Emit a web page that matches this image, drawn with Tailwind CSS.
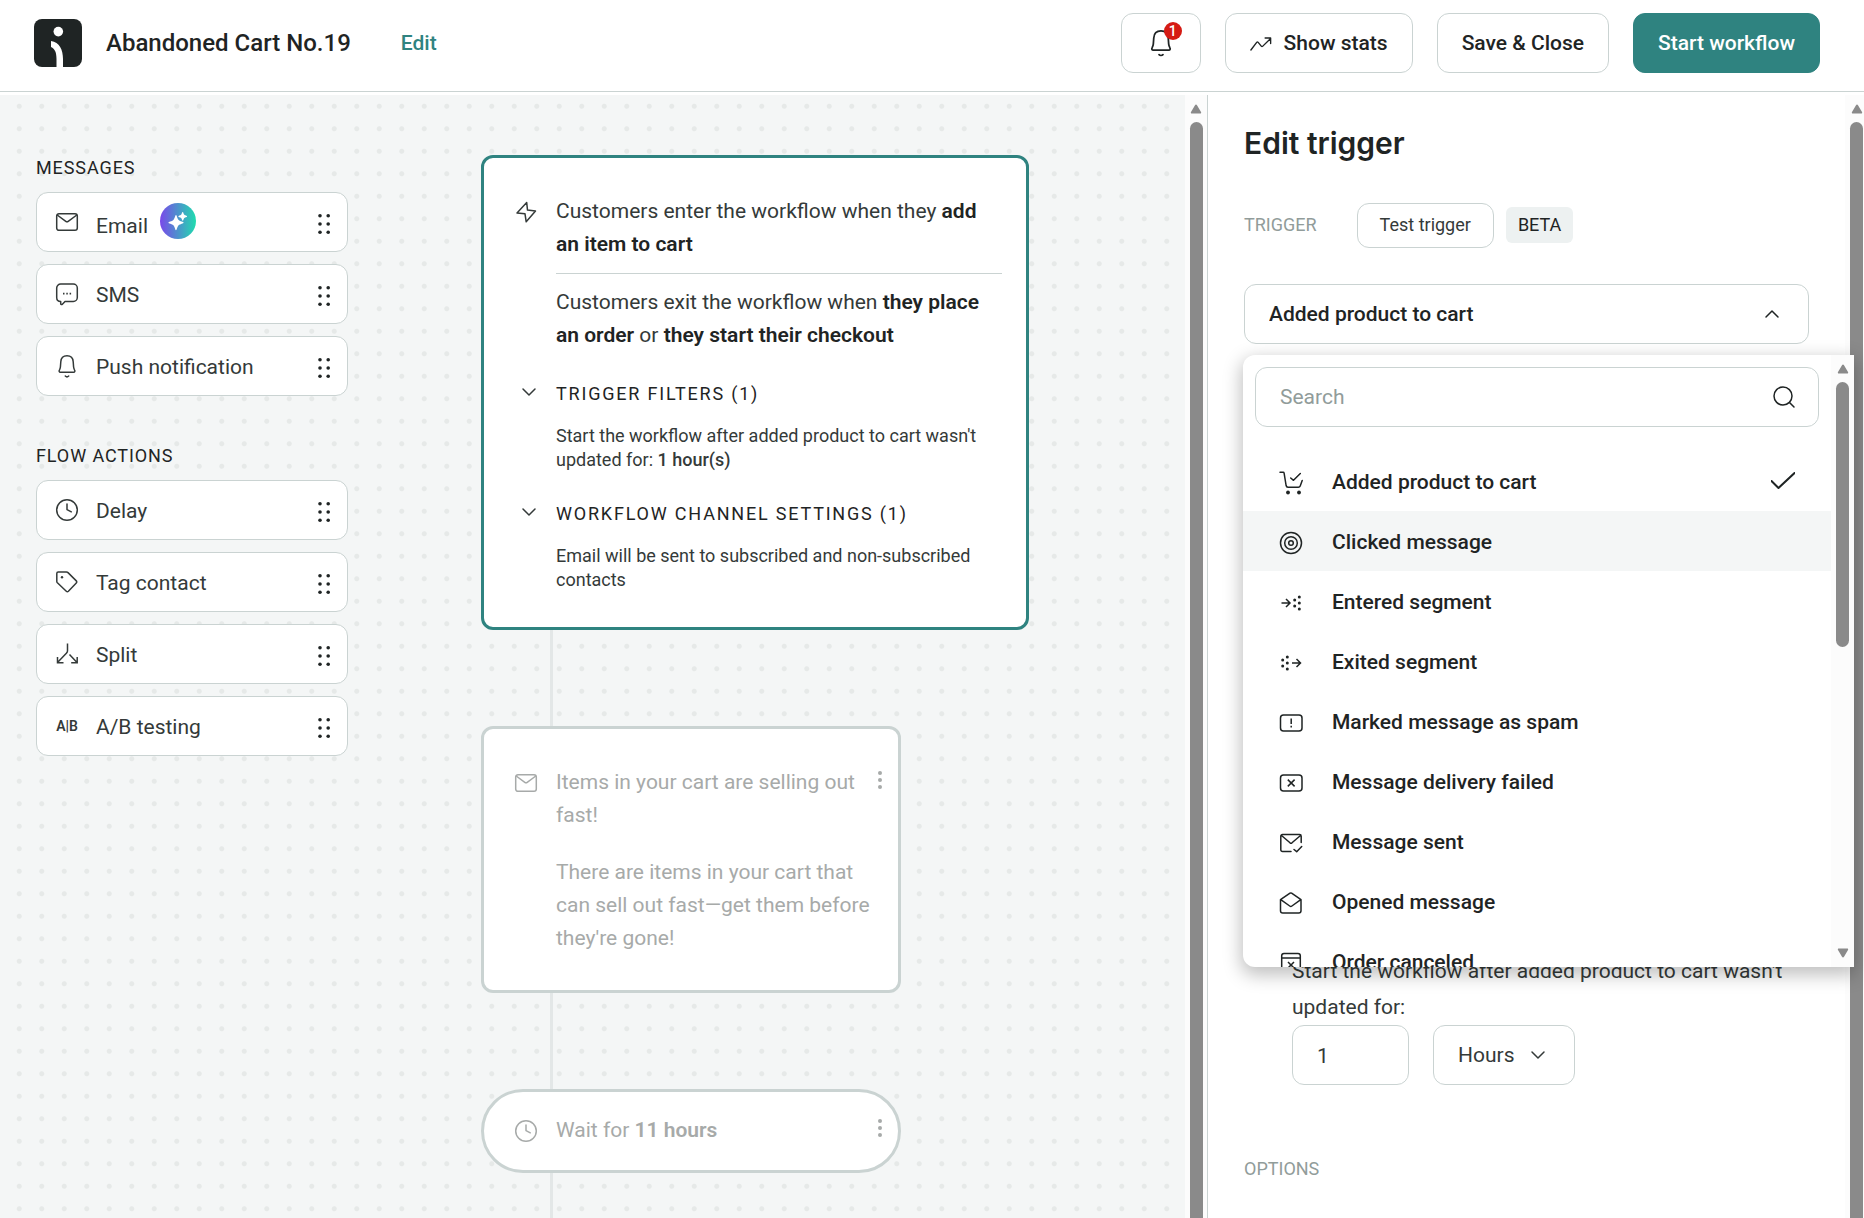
<!DOCTYPE html>
<html lang="en">
<head>
  <meta charset="UTF-8" />
  <meta name="viewport" content="width=device-width, initial-scale=1.0" />
  <title>Abandoned Cart No.19</title>
  <script src="https://cdn.jsdelivr.net/npm/@tailwindcss/browser@4"></script>
  <style>
    body {
      font-family: Roboto, "Liberation Sans", sans-serif;
    }
    .dots {
      background-color: #f4f6f6;
      background-image:
        radial-gradient(circle at 25% 25%, #e6e9e8 2px, transparent 3px),
        radial-gradient(circle at 75% 25%, #e6e9e8 2px, transparent 3px),
        radial-gradient(circle at 25% 75%, #e6e9e8 2px, transparent 3px),
        radial-gradient(circle at 75% 75%, #e6e9e8 2px, transparent 3px);
      background-size: 45px 45px;
      background-position: 8px 0;
    }
  </style>
</head>
<body class="h-screen flex flex-col overflow-hidden bg-white text-[21px] text-[#1f2424]">

  <!-- shared icons -->
  <svg class="hidden">
    <symbol id="mail" viewBox="0 0 24 24" fill="none" stroke="currentColor" stroke-width="1.5" stroke-linejoin="round">
      <rect x="1.7" y="3.7" width="20.6" height="16.6" rx="2.3" />
      <path d="M2.2 5l8.6 6.3c.8.6 1.6.6 2.4 0L21.8 5" />
    </symbol>
    <symbol id="bell" viewBox="0 0 24 24" fill="none" stroke="currentColor" stroke-width="1.5" stroke-linejoin="round" stroke-linecap="round">
      <path d="M12 1.7c-3.8 0-6 2.5-6.2 6L5.4 13c-.1 1-.4 1.9-.9 2.8-.8 1.3-.3 2.4.9 2.4h13.2c1.2 0 1.7-1.1.9-2.4-.5-.9-.8-1.8-.9-2.8l-.4-5.3c-.2-3.5-2.4-6-6.2-6z" />
      <path d="M10.3 22c.9.9 2.500.9 3.400 0" />
    </symbol>
    <symbol id="clock" viewBox="0 0 24 24" fill="none" stroke="currentColor" stroke-width="1.5" stroke-linecap="round" stroke-linejoin="round">
      <circle cx="12" cy="12" r="10.3" />
      <path d="M12 6v5.600l4.300 2.200" />
    </symbol>
    <symbol id="handle" viewBox="0 0 24 24" fill="currentColor">
      <circle cx="8" cy="3.7" r="1.8" /><circle cx="16.2" cy="3.7" r="1.8" />
      <circle cx="8" cy="12" r="1.8" /><circle cx="16.2" cy="12" r="1.8" />
      <circle cx="8" cy="20.3" r="1.8" /><circle cx="16.2" cy="20.3" r="1.8" />
    </symbol>
    <symbol id="kebab" viewBox="0 0 24 24" fill="currentColor">
      <circle cx="12" cy="5" r="2" /><circle cx="12" cy="12" r="2" /><circle cx="12" cy="19" r="2" />
    </symbol>
    <symbol id="chevron" viewBox="0 0 18 18" fill="none" stroke="currentColor" stroke-width="1.5" stroke-linecap="round" stroke-linejoin="round">
      <path d="M3 6l6 6 6-6" />
    </symbol>
    <symbol id="arrow" viewBox="0 0 12 10" fill="#8a8a8a">
      <path d="M5 1.2c.5-.9 1.500-.9 2 0l4 6.800c.5.900 0 1.500-.8 1.500H1.800C1 9.500.5 8.900 1 8z" />
    </symbol>
  </svg>

  <header class="h-[92px] shrink-0 flex items-center border-b border-[#cad3d2] pb-[5px] pl-[34px] pr-11 font-medium">
    <svg class="size-12" viewBox="0 0 48 48">
      <rect width="48" height="48" rx="8" fill="#1f2424" />
      <circle cx="24.3" cy="12.6" r="4.8" fill="#fff" />
      <path d="M17 22C25.500 23 29 31 29 40v8h-6.500v-8c0-6.500-1.500-10-5.500-12z" fill="#fff" />
    </svg>
    <h1 class="ml-6 text-2xl">Abandoned Cart No.19</h1>
    <a href="#" class="ml-[50px] pt-0.5 text-[#2f8380]">Edit</a>
    <div class="ml-auto flex gap-6">
      <button aria-label="Notifications" class="relative flex h-[60px] w-20 items-center justify-center rounded-xl border border-[#cad3d2]">
        <svg class="size-7"><use href="#bell" /></svg>
        <span class="absolute right-[18px] top-2 flex size-[18px] items-center justify-center rounded-full bg-[#d51b14] text-sm text-white">1</span>
      </button>
      <button class="flex h-[60px] items-center gap-3 rounded-xl border border-[#cad3d2] px-6 pt-0.5">
        <svg class="size-[22px]" viewBox="0 0 24 24" fill="none" stroke="currentColor" stroke-width="1.5" stroke-linejoin="round" stroke-linecap="round">
          <path d="M1 18.500l6.500-8.500c.4-.4.800-.4 1.200 0l3.800 4.600c.4.400.8.400 1.200 0L22.500 6M16.500 5.500h6v6" />
        </svg>
        Show stats
      </button>
      <button class="h-[60px] rounded-xl border border-[#cad3d2] px-6 pt-0.5">Save &amp; Close</button>
      <button class="h-[60px] rounded-xl border border-[#2f8380] bg-[#2f8380] px-6 pt-0.5 text-white">Start workflow</button>
    </div>
  </header>

  <main class="mt-[3px] flex min-h-0 flex-1">

    <!-- workflow canvas -->
    <div class="dots flex min-w-0 flex-1 overflow-hidden pl-9">
      <aside class="w-[312px] shrink-0 pt-[61px] text-[#343a39]">
        <h2 class="mb-3 text-lg leading-6 tracking-wider text-[#1f2424]">MESSAGES</h2>
        <ul class="flex flex-col gap-3">
          <li class="flex h-[60px] items-center gap-[17px] rounded-xl border border-[#cad3d2] bg-white pl-[18px] pr-[11px]">
            <svg class="size-6"><use href="#mail" /></svg>
            <span class="flex flex-1 items-center gap-3">
              <span class="pt-2.5">Email</span>
              <svg class="mb-0.5 size-9" viewBox="0 0 36 36">
                <defs>
                  <linearGradient id="ai"><stop offset="0" stop-color="#7a48ea" /><stop offset="1" stop-color="#1fdcae" /></linearGradient>
                </defs>
                <circle cx="18" cy="18" r="18" fill="url(#ai)" />
                <path d="M16 12c.9 0 1.100 3.500 2.600 5s5 1.700 5 2.700-3.500 1.100-5 2.600-1.700 5-2.600 5-1.100-3.500-2.600-5-5-1.700-5-2.600 3.500-1.200 5-2.700 1.700-5 2.600-5z" fill="#fff" />
                <path d="M22.700 9c.7 0 .7 2 1.600 2.800s2.800.9 2.800 1.600-2 .8-2.800 1.600-.9 2.800-1.600 2.800-.7-2-1.600-2.800-2.800-.9-2.800-1.600 2-.8 2.800-1.600.9-2.800 1.600-2.800z" fill="#fff" />
              </svg>
            </span>
            <svg class="mt-1 size-6 text-[#1f2424]"><use href="#handle" /></svg>
          </li>
          <li class="flex h-[60px] items-center gap-[17px] rounded-xl border border-[#cad3d2] bg-white pl-[18px] pr-[11px]">
            <svg class="size-6" viewBox="0 0 24 24" fill="none" stroke="currentColor" stroke-width="1.5" stroke-linejoin="round">
              <path d="M5.700 2h12.600a4 4 0 0 1 4 4v9.500a4 4 0 0 1-4 4H10l-2.600 2.700c-.7.700-1.700.5-1.700-.5V19.500c-2.200 0-4-1.500-4-4V6a4 4 0 0 1 4-4z" />
              <path d="M8 11.700h1.500M11.300 11.700h1.500M14.600 11.700h1.500" stroke-width="1.8" />
            </svg>
            <span class="flex-1 pt-[3px]">SMS</span>
            <svg class="mt-1 size-6 text-[#1f2424]"><use href="#handle" /></svg>
          </li>
          <li class="flex h-[60px] items-center gap-[17px] rounded-xl border border-[#cad3d2] bg-white pl-[18px] pr-[11px]">
            <svg class="size-6"><use href="#bell" /></svg>
            <span class="flex-1 pt-[3px]">Push notification</span>
            <svg class="mt-1 size-6 text-[#1f2424]"><use href="#handle" /></svg>
          </li>
        </ul>

        <h2 class="mb-3 mt-12 text-lg leading-6 tracking-wider text-[#1f2424]">FLOW ACTIONS</h2>
        <ul class="flex flex-col gap-3">
          <li class="flex h-[60px] items-center gap-[17px] rounded-xl border border-[#cad3d2] bg-white pl-[18px] pr-[11px]">
            <svg class="size-6"><use href="#clock" /></svg>
            <span class="flex-1 pt-[3px]">Delay</span>
            <svg class="mt-1 size-6 text-[#1f2424]"><use href="#handle" /></svg>
          </li>
          <li class="flex h-[60px] items-center gap-[17px] rounded-xl border border-[#cad3d2] bg-white pl-[18px] pr-[11px]">
            <svg class="size-6" viewBox="0 0 24 24" fill="none" stroke="currentColor" stroke-width="1.5" stroke-linejoin="round">
              <path d="M3.200 2h8.300c.6 0 1.100.2 1.500.6l8.300 8.300c.6.6.6 1.400 0 2l-7.900 8.300c-.6.600-1.500.6-2.100 0l-8.900-8.400c-.4-.4-.6-.9-.6-1.400V3.400C1.800 2.600 2.400 2 3.200 2z" />
              <circle cx="7" cy="7.3" r="1.2" fill="currentColor" stroke="none" />
            </svg>
            <span class="flex-1 pt-[3px]">Tag contact</span>
            <svg class="mt-1 size-6 text-[#1f2424]"><use href="#handle" /></svg>
          </li>
          <li class="flex h-[60px] items-center gap-[17px] rounded-xl border border-[#cad3d2] bg-white pl-[18px] pr-[11px]">
            <svg class="size-6" viewBox="0 0 24 24" fill="none" stroke="currentColor" stroke-width="1.5">
              <path d="M12.500 1.500v7.200c0 .9-.3 1.600-.9 2.200L2.500 20.500M2.500 15v5.700h6M14.500 12.500l7.500 8M22.200 15v5.700h-6" />
            </svg>
            <span class="flex-1 pt-[3px]">Split</span>
            <svg class="mt-1 size-6 text-[#1f2424]"><use href="#handle" /></svg>
          </li>
          <li class="flex h-[60px] items-center gap-[17px] rounded-xl border border-[#cad3d2] bg-white pl-[18px] pr-[11px]">
            <span class="w-6 text-center text-sm font-semibold">A|B</span>
            <span class="flex-1 pt-[3px]">A/B testing</span>
            <svg class="mt-1 size-6 text-[#1f2424]"><use href="#handle" /></svg>
          </li>
        </ul>
      </aside>

      <section class="ml-[133px] flex w-[548px] shrink-0 flex-col pt-[60px] leading-[33px] text-[#343a39]">
        <article class="grid grid-cols-[24px_1fr] gap-x-[18px] rounded-xl border-3 border-[#2f8380] bg-white pb-[35px] pl-[30px] pr-6 pt-[37px]">
          <svg class="mt-[5px] size-6" viewBox="0 0 24 24" fill="none" stroke="currentColor" stroke-width="1.5" stroke-linejoin="round">
            <path d="M12.700 2.500 3 12.900l8 .900 1.200 8L21.500 11l-8-.900z" />
          </svg>
          <div>
            <p>Customers enter the workflow when they <strong class="font-semibold text-[#1f2424]">add an item to cart</strong></p>
            <hr class="my-3 border-[#cad3d2]" />
            <p>Customers exit the workflow when <strong class="font-semibold text-[#1f2424]">they place an order</strong> or <strong class="font-semibold text-[#1f2424]">they start their checkout</strong></p>
          </div>
          <svg class="mt-[31px] size-[18px] justify-self-end"><use href="#chevron" /></svg>
          <div class="mt-[30px] text-lg leading-6">
            <h3 class="tracking-widest text-[#1f2424]">TRIGGER FILTERS (1)</h3>
            <p class="mt-[18px]">Start the workflow after added product to cart wasn't updated for: <strong class="font-medium">1 hour(s)</strong></p>
          </div>
          <svg class="mt-[31px] size-[18px] justify-self-end"><use href="#chevron" /></svg>
          <div class="mt-[30px] text-lg leading-6">
            <h3 class="tracking-widest text-[#1f2424]">WORKFLOW CHANNEL SETTINGS (1)</h3>
            <p class="mt-[18px]">Email will be sent to subscribed and non-subscribed contacts</p>
          </div>
        </article>

        <div class="ml-[69px] h-24 w-[3px] shrink-0 bg-[#e3e7e7]"></div>

        <article class="relative flex w-[420px] gap-[18px] rounded-xl border-3 border-[#cad3d2] bg-white pb-[35px] pl-[30px] pr-6 pt-[37px] text-[#a7aaa9]">
          <svg class="mt-[5px] size-6 shrink-0"><use href="#mail" /></svg>
          <div>
            <p>Items in your cart are selling out fast!</p>
            <p class="mt-6">There are items in your cart that can sell out fast—get them before they're gone!</p>
          </div>
          <button aria-label="Message options" class="absolute right-1.5 top-[39px]"><svg class="size-6"><use href="#kebab" /></svg></button>
        </article>

        <div class="ml-[69px] h-24 w-[3px] shrink-0 bg-[#e3e7e7]"></div>

        <article class="relative flex w-[420px] gap-[18px] rounded-full border-3 border-[#cad3d2] bg-white pb-[23px] pl-[30px] pr-6 pt-[22px] text-[#a7aaa9]">
          <svg class="mt-[5px] size-6 shrink-0"><use href="#clock" /></svg>
          <p>Wait for <strong class="font-semibold">11 hours</strong></p>
          <button aria-label="Delay options" class="absolute right-1.5 top-6"><svg class="size-6"><use href="#kebab" /></svg></button>
        </article>

        <div class="ml-[69px] w-[3px] flex-1 bg-[#e3e7e7]"></div>
      </section>
    </div>

    <div class="flex w-[22px] shrink-0 flex-col items-center gap-2 bg-[#fcfcfc] pt-[9px]">
      <svg class="h-[10px] w-3"><use href="#arrow" /></svg>
      <div class="w-[13px] flex-1 rounded-t-full bg-[#8a8a8a]"></div>
    </div>

    <!-- trigger settings -->
    <aside class="flex w-[657px] shrink-0 overflow-hidden border-l border-[#cad3d2]">
      <div class="min-w-0 flex-1 px-9 pt-[27px]">
        <h2 class="font-[Inter] text-3xl leading-[42px] font-semibold">Edit trigger</h2>

        <div class="mt-[39px] flex items-center text-lg">
          <span class="mb-0.5 text-[#919c9a]">TRIGGER</span>
          <button class="ml-10 h-[45px] rounded-xl border border-[#cad3d2] px-[22px] pb-0.5 text-[#343a39]">Test trigger</button>
          <span class="mb-0.5 ml-3 rounded-md bg-[#edf1f1] px-3 leading-9">BETA</span>
        </div>

        <div class="relative mt-9">
          <select aria-label="Trigger" class="block h-[60px] w-full appearance-none rounded-xl border border-[#cad3d2] bg-white px-6 pt-0.5 font-medium">
            <option>Added product to cart</option>
            <option>Clicked message</option>
            <option>Entered segment</option>
            <option>Exited segment</option>
          </select>
          <svg class="pointer-events-none absolute right-7 top-[21px] size-[18px] rotate-180"><use href="#chevron" /></svg>

          <!-- open trigger menu -->
          <div class="absolute -left-px -right-[45px] top-[71px] z-10 flex h-[612px] overflow-hidden rounded-l-xl bg-white shadow-[0_6px_18px_2px_rgba(0,0,0,0.25)]">
            <div class="min-w-0 flex-1">
              <label class="mx-3 mt-3 flex h-[60px] items-center rounded-xl border border-[#cad3d2] pl-6 pr-[22px]">
                <input type="search" aria-label="Search triggers" placeholder="Search" class="min-w-0 flex-1 pt-0.5 outline-none placeholder:text-[#919c9a]" />
                <svg class="size-6" viewBox="0 0 24 24" fill="none" stroke="currentColor" stroke-width="1.5" stroke-linecap="round">
                  <circle cx="11" cy="11" r="9" /><path d="M17.500 17.500l4.500 4.500" />
                </svg>
              </label>
              <ul class="mt-6 font-medium">
                <li>
                  <button class="flex h-[60px] w-full items-center px-9 pt-1 text-left">
                    <svg class="mr-[29px] size-6" viewBox="0 0 24 24" fill="none" stroke="currentColor" stroke-width="1.5" stroke-linejoin="round" stroke-linecap="round">
                      <path d="M1 1.300h3.200c.5 0 .8.3.9.8l2 12.400c.2 1 .9 1.700 1.900 1.700h10.300c1 0 1.600-.4 1.900-1.300l2-5.400M11.700 7l2.800 2.300 6.800-6.800" />
                      <circle cx="9" cy="21.5" r="1.9" fill="currentColor" stroke="none" /><circle cx="20" cy="21.5" r="1.9" fill="currentColor" stroke="none" />
                    </svg>
                    <span class="flex-1">Added product to cart</span>
                    <svg class="mb-1 size-6" viewBox="0 0 24 24" fill="none" stroke="currentColor" stroke-width="2" stroke-linecap="round" stroke-linejoin="round"><path d="M.5 12l7 7L23.500 4" /></svg>
                  </button>
                </li>
                <li>
                  <button class="flex h-[60px] w-full items-center bg-[#f4f6f6] px-9 pt-1 text-left">
                    <svg class="mr-[29px] size-6" viewBox="0 0 24 24" fill="none" stroke="currentColor" stroke-width="1.5">
                      <circle cx="12" cy="12" r="10.5" /><circle cx="12" cy="12" r="6.3" /><circle cx="12" cy="12" r="2.3" />
                    </svg>
                    Clicked message
                  </button>
                </li>
                <li>
                  <button class="flex h-[60px] w-full items-center px-9 pt-1 text-left">
                    <svg class="mr-[29px] size-6" viewBox="0 0 24 24" fill="currentColor">
                      <path d="M2.500 12h8M7 8l4 4-4 4" fill="none" stroke="currentColor" stroke-width="1.5" />
                      <circle cx="15.7" cy="9" r="1.5" /><circle cx="15.7" cy="15" r="1.5" /><circle cx="20.3" cy="6" r="1.5" /><circle cx="20.3" cy="12" r="1.5" /><circle cx="20.3" cy="18" r="1.5" />
                    </svg>
                    Entered segment
                  </button>
                </li>
                <li>
                  <button class="flex h-[60px] w-full items-center px-9 pt-1 text-left">
                    <svg class="mr-[29px] size-6" viewBox="0 0 24 24" fill="currentColor">
                      <path d="M13 12h8M17.500 8l4 4-4 4" fill="none" stroke="currentColor" stroke-width="1.5" />
                      <circle cx="3.7" cy="9" r="1.5" /><circle cx="3.7" cy="15" r="1.5" /><circle cx="8.3" cy="6" r="1.5" /><circle cx="8.3" cy="12" r="1.5" /><circle cx="8.3" cy="18" r="1.5" />
                    </svg>
                    Exited segment
                  </button>
                </li>
                <li>
                  <button class="flex h-[60px] w-full items-center px-9 pt-1 text-left">
                    <svg class="mr-[29px] size-6" viewBox="0 0 24 24" fill="none" stroke="currentColor" stroke-width="1.5">
                      <rect x="1.5" y="4" width="21.5" height="16" rx="3" /><path d="M12.200 7.500V13M12.200 14.800v1.700" />
                    </svg>
                    Marked message as spam
                  </button>
                </li>
                <li>
                  <button class="flex h-[60px] w-full items-center px-9 pt-1 text-left">
                    <svg class="mr-[29px] size-6" viewBox="0 0 24 24" fill="none" stroke="currentColor" stroke-width="1.5">
                      <rect x="1.5" y="4" width="21.5" height="16" rx="3" /><path d="M8.800 8.600l6.800 6.800M15.600 8.600l-6.800 6.800" />
                    </svg>
                    Message delivery failed
                  </button>
                </li>
                <li>
                  <button class="flex h-[60px] w-full items-center px-9 pt-1 text-left">
                    <svg class="mr-[29px] size-6" viewBox="0 0 24 24" fill="none" stroke="currentColor" stroke-width="1.5" stroke-linejoin="round" stroke-linecap="round">
                      <path d="M12 20.500H3.500c-1 0-1.700-.7-1.700-1.700V5.200c0-1 .7-1.700 1.700-1.700h17c1 0 1.700.7 1.700 1.700v6.300M2.200 4.300l8.800 7.500c.7.500 1.300.5 2 0l8.800-7.500M15 18.500l2.700 2.200 5-5.200" />
                    </svg>
                    Message sent
                  </button>
                </li>
                <li>
                  <button class="flex h-[60px] w-full items-center px-9 pt-1 text-left">
                    <svg class="mr-[29px] size-6" viewBox="0 0 24 24" fill="none" stroke="currentColor" stroke-width="1.5" stroke-linejoin="round">
                      <path d="M1.500 8.700 11 2.200c.6-.4 1-.4 1.600 0l9.400 6.500v11c0 1.400-.9 2.300-2.300 2.300H3.800c-1.400 0-2.300-.9-2.300-2.300zM1.800 8.700l8.900 6.300c.7.500 1.500.5 2.200 0l8.900-6.300" />
                    </svg>
                    Opened message
                  </button>
                </li>
                <li>
                  <button class="flex h-[60px] w-full items-center px-9 pt-1 text-left">
                    <svg class="mr-[29px] size-6" viewBox="0 0 24 24" fill="none" stroke="currentColor" stroke-width="1.5" stroke-linejoin="round">
                      <rect x="2.7" y="2.5" width="18.6" height="19" rx="2.3" /><path d="M2.700 7h18.600M9 11l6 6M15 11l-6 6" />
                    </svg>
                    Order canceled
                  </button>
                </li>
              </ul>
            </div>
            <div class="flex w-[23px] shrink-0 flex-col items-center gap-2 bg-[#fcfcfc] py-[9px]">
              <svg class="h-[10px] w-3"><use href="#arrow" /></svg>
              <div class="h-[265px] w-[13px] rounded-full bg-[#8a8a8a]"></div>
              <svg class="mt-auto h-[10px] w-3 rotate-180"><use href="#arrow" /></svg>
            </div>
          </div>
        </div>

        <div class="ml-12 mt-[609px] text-[#343a39]">
          <label for="amount" class="block leading-9">Start the workflow after added product to cart wasn't updated for:</label>
          <div class="flex gap-6">
            <input id="amount" type="text" value="1" class="h-[60px] w-[117px] rounded-xl border border-[#cad3d2] px-6 pt-0.5" />
            <div class="relative">
              <select aria-label="Unit" class="h-[60px] w-[142px] appearance-none rounded-xl border border-[#cad3d2] bg-white px-6 pt-0.5">
                <option>Hours</option>
                <option>Days</option>
              </select>
              <svg class="pointer-events-none absolute right-7 top-[21px] size-[18px]"><use href="#chevron" /></svg>
            </div>
          </div>
        </div>

        <h3 class="mt-[72px] text-lg leading-6 text-[#919c9a]">OPTIONS</h3>
      </div>

      <div class="flex w-[19px] shrink-0 flex-col items-end gap-2 bg-[#fcfcfc] pr-px pt-[9px]">
        <svg class="h-[10px] w-3"><use href="#arrow" /></svg>
        <div class="w-[13px] flex-1 rounded-t-full bg-[#8a8a8a]"></div>
      </div>
    </aside>
  </main>

</body>
</html>
